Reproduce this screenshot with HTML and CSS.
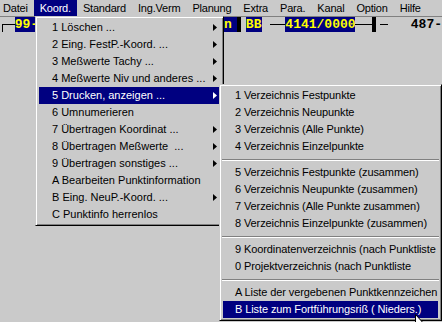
FILE: index.html
```html
<!DOCTYPE html>
<html>
  <head>
    <title>Koord.</title>
    <link rel="stylesheet" href="styles.css">
  </head>
  <body>
    <div id="screen">
      <div class="menubar">
        <span class="mitem">Datei</span>
        <span class="mitem active">Koord.</span>
        <span class="mitem">Standard</span>
        <span class="mitem">Ing.Verm</span>
        <span class="mitem">Planung</span>
        <span class="mitem">Extra</span>
        <span class="mitem">Para.</span>
        <span class="mitem">Kanal</span>
        <span class="mitem">Option</span>
        <span class="mitem">Hilfe</span>
      </div>

      <div class="fields">
        <span class="corner"></span>
        <span class="fld f-pre">99-</span>
        <span class="fld f-n">n</span>
        <span class="bar"></span>
        <span class="fld f-bb">BB</span>
        <span class="dash d1"></span>
        <span class="fld f-nr">4141/0000</span>
        <span class="dash d2"></span>
        <span class="bar"></span>
        <span class="dash d3"></span>
        <span class="val">487-</span>
      </div>

      <div class="menu main-menu">
        <div class="item sub">1 Löschen ...</div>
        <div class="item sub">2 Eing. FestP.-Koord. ...</div>
        <div class="item sub">3 Meßwerte Tachy ...</div>
        <div class="item sub">4 Meßwerte Niv und anderes ...</div>
        <div class="item sub hi">5 Drucken, anzeigen ...</div>
        <div class="item">6 Umnumerieren</div>
        <div class="item sub">7 Übertragen Koordinat ...</div>
        <div class="item sub">8 Übertragen Meßwerte&nbsp; ...</div>
        <div class="item sub">9 Übertragen sonstiges ...</div>
        <div class="item">A Bearbeiten Punktinformation</div>
        <div class="item sub">B Eing. NeuP.-Koord. ...</div>
        <div class="item">C Punktinfo herrenlos</div>
      </div>

      <div class="menu sub-menu">
        <div class="item">1 Verzeichnis Festpunkte</div>
        <div class="item">2 Verzeichnis Neupunkte</div>
        <div class="item">3 Verzeichnis (Alle Punkte)</div>
        <div class="item">4 Verzeichnis Einzelpunkte</div>
        <div class="sep"></div>
        <div class="item">5 Verzeichnis Festpunkte (zusammen)</div>
        <div class="item">6 Verzeichnis Neupunkte (zusammen)</div>
        <div class="item">7 Verzeichnis (Alle Punkte zusammen)</div>
        <div class="item">8 Verzeichnis Einzelpunkte (zusammen)</div>
        <div class="sep"></div>
        <div class="item">9 Koordinatenverzeichnis (nach Punktliste</div>
        <div class="item">0 Projektverzeichnis (nach Punktliste</div>
        <div class="sep"></div>
        <div class="item">A Liste der vergebenen Punktkennzeichen</div>
        <div class="item hi">B Liste zum Fortführungsriß ( Nieders.)</div>
      </div>

      <svg class="cursor" width="12" height="19" viewBox="0 0 12 19">
        <path d="M0.5 0.5 L0.5 15.5 L4 12 L6.5 17.5 L8.5 16.5 L6 11.5 L10.5 11.5 Z" fill="#fff" stroke="#000" stroke-width="1"/>
      </svg>
    </div>
  </body>
</html>
```

FILE: styles.css
```css
body {
  margin: 0;
  background-color: #cacaca;
  font-family: "Liberation Sans", Arial, sans-serif;
  font-size: 11px;
  overflow: hidden;
}

#screen {
  position: relative;
  width: 442px;
  height: 322px;
  overflow: hidden;
}

.menubar {
  display: flex;
  height: 16px;
  line-height: 16px;
  border-bottom: 1px solid #808080;
  white-space: nowrap;
  letter-spacing: -0.2px;
}

.mitem {
  padding: 0 6px;
}

.mitem:first-child {
  padding-left: 3px;
}

.mitem.active {
  background-color: #000080;
  color: white;
}

/* field row under the menu */
.fields {
  display: flex;
  align-items: center;
  height: 15px;
  font-family: "Liberation Mono", "Courier New", monospace;
  font-weight: bold;
  font-size: 13px;
  line-height: 15px;
  white-space: nowrap;
}

.corner {
  align-self: flex-end;
  margin-left: 2px;
  width: 12px;
  height: 7px;
  border-left: 1px solid black;
  border-top: 1px solid black;
}

.fld {
  height: 15px;
  background-color: #000080;
  color: #ffff00;
  overflow: hidden;
}

.f-pre {
  width: 40px;
}

.f-n {
  margin-left: 160px;
  width: 23px;
  text-align: right;
  padding-right: 5px;
  box-sizing: border-box;
}

.f-bb {
  margin-left: 5px;
  width: 16px;
}

.f-nr {
  width: 71px;
}

.bar {
  width: 4px;
  height: 15px;
  background-color: black;
}

.dash {
  height: 1px;
  background-color: black;
}

.d1 {
  margin-left: 8px;
  width: 16px;
}

.d2 {
  width: 17px;
}

.d3 {
  margin-left: 4px;
  width: 8px;
}

.val {
  margin-left: 23px;
  color: black;
}

/* dropdown menus */
.menu {
  position: absolute;
  background-color: #cacaca;
  border: 1px solid;
  border-color: #cacaca black black #cacaca;
  box-shadow: inset 1px 1px white, inset -1px -1px #808080;
  padding: 2px 3px;
  white-space: nowrap;
}

.main-menu {
  left: 35px;
  top: 16px;
  width: 181px;
}

.sub-menu {
  left: 219px;
  top: 84px;
  width: 215px;
  letter-spacing: -0.1px;
}

.item {
  position: relative;
  height: 17px;
  line-height: 17px;
  padding-left: 13px;
  color: black;
}

.sub-menu .item {
  padding-left: 12px;
}

.item.sub::after {
  content: "";
  position: absolute;
  right: 3px;
  top: 5px;
  width: 4px;
  height: 7px;
  background-color: black;
  clip-path: polygon(0 0, 100% 50%, 0 100%);
}

.item.hi {
  background-color: #000080;
  color: white;
}

.item.hi::after {
  background-color: white;
}

.sep {
  margin: 4px -1px 3px;
  border-top: 1px solid #808080;
  border-bottom: 1px solid white;
}

.cursor {
  position: absolute;
  left: 415px;
  top: 314px;
}
```
